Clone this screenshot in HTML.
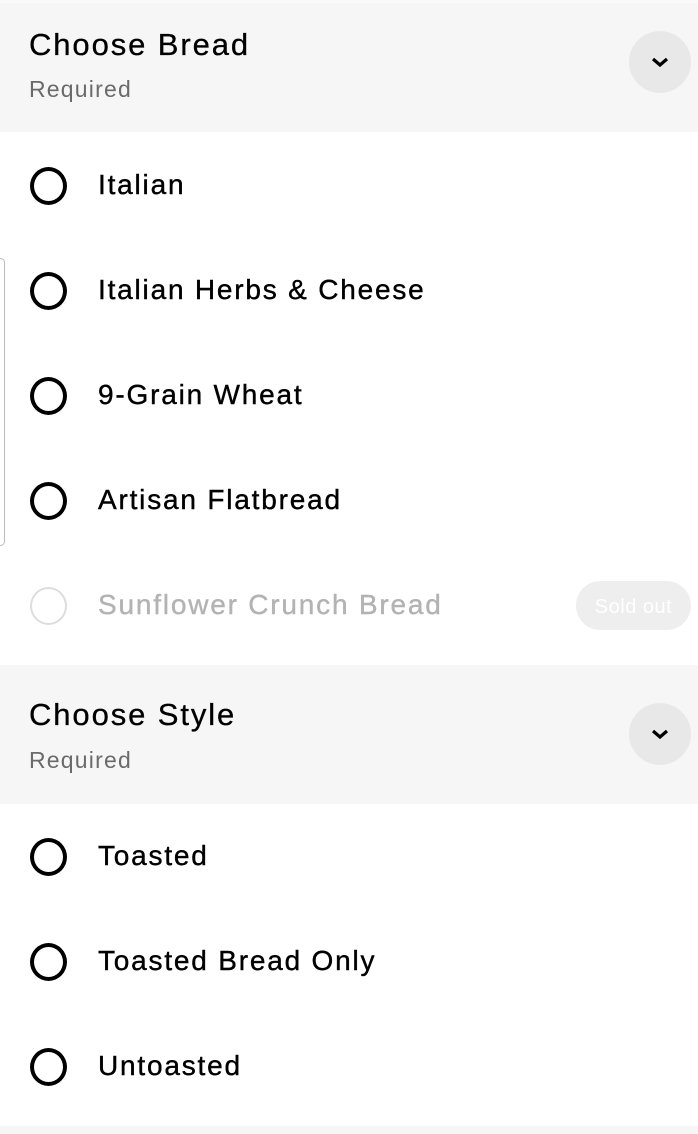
<!DOCTYPE html>
<html><head><meta charset="utf-8"><style>
*{margin:0;padding:0;box-sizing:border-box}
body{width:698px;height:1134px;background:#fff;font-family:"Liberation Sans",sans-serif;position:relative;overflow:hidden;color:#000}
.hdr{position:absolute;left:0;width:698px;background:#f6f6f6}
.t{position:absolute;left:29px;font-size:31px;letter-spacing:1.9px;-webkit-text-stroke:0.3px #000}
.r{position:absolute;left:29px;font-size:23px;color:#6b6b6b;letter-spacing:1.2px}
.btn{position:absolute;left:629px;width:62px;height:62px;border-radius:50%;background:#e8e8e8}
.btn svg{position:absolute;left:21px;top:21px}
.it{position:absolute;left:0;width:698px;height:40px}
.c{position:absolute;left:30px;top:1px;width:37px;height:38px;border:4px solid #000;border-radius:50%}
.lbl{position:absolute;left:98px;top:2px;font-size:28px;letter-spacing:1.8px;line-height:34px;-webkit-text-stroke:0.4px #000}
</style></head><body>
<div class="hdr" style="top:0;height:3px;background:#fafafa"></div>
<div class="hdr" style="top:3px;height:129px">
 <div class="t" style="top:24px">Choose Bread</div>
 <div class="r" style="top:73px">Required</div>
 <div class="btn" style="top:28px"><svg width="20" height="20" viewBox="0 0 20 20"><path d="M3 7l7 6 7-6" stroke="#000" stroke-width="3.2" fill="none"/></svg></div>
</div>
<div style="position:absolute;left:-4px;top:258px;width:9px;height:288px;border:1px solid #bbb;border-radius:5px"></div>
<div class="it" style="top:166px"><div class="c"></div><div class="lbl">Italian</div></div>
<div class="it" style="top:271px"><div class="c"></div><div class="lbl">Italian Herbs &amp; Cheese</div></div>
<div class="it" style="top:376px"><div class="c"></div><div class="lbl">9-Grain Wheat</div></div>
<div class="it" style="top:481px"><div class="c"></div><div class="lbl">Artisan Flatbread</div></div>
<div class="it" style="top:586px"><div class="c" style="border:2px solid #ddd"></div><div class="lbl" style="color:#b3b3b3;-webkit-text-stroke:0.4px #b3b3b3">Sunflower Crunch Bread</div>
 <div style="position:absolute;left:576px;top:-5px;width:115px;height:49px;border-radius:25px;background:#eeeeee;color:#fff;font-size:20px;line-height:53px;text-align:center;letter-spacing:0.5px">Sold out</div></div>
<div class="hdr" style="top:665px;height:139px">
 <div class="t" style="top:32px">Choose Style</div>
 <div class="r" style="top:82px">Required</div>
 <div class="btn" style="top:38px"><svg width="20" height="20" viewBox="0 0 20 20"><path d="M3 7l7 6 7-6" stroke="#000" stroke-width="3.2" fill="none"/></svg></div>
</div>
<div class="it" style="top:837px"><div class="c"></div><div class="lbl">Toasted</div></div>
<div class="it" style="top:942px"><div class="c"></div><div class="lbl">Toasted Bread Only</div></div>
<div class="it" style="top:1047px"><div class="c"></div><div class="lbl">Untoasted</div></div>
<div class="hdr" style="top:1126px;height:8px"></div>
</body></html>
